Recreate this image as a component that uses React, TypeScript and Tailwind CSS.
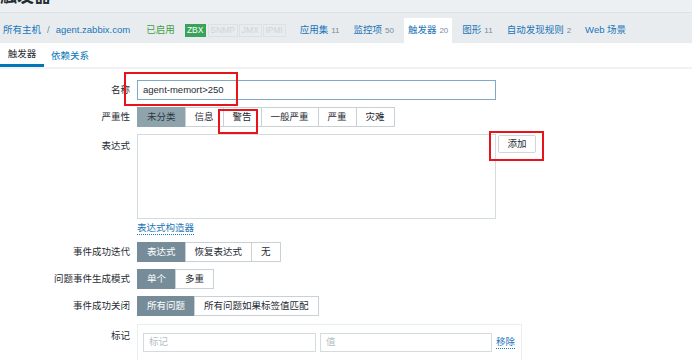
import React from "react";

const font = { fontFamily: '"Liberation Sans", "Noto Sans CJK SC", Arial, sans-serif' };

function Seg({ items, sel, selCls }: { items: string[]; sel: number; selCls?: string }) {
  return (
    <div className="flex h-[20px]">
      {items.map((t, i) => (
        <div
          key={t}
          className={
            "flex items-center px-[9px] border text-[9.5px] leading-none whitespace-nowrap " +
            (i > 0 ? "-ml-px " : "") +
            (i === sel
              ? selCls ?? "bg-[#768d99] border-[#768d99] text-white"
              : "bg-white border-[#c7d1d6] text-[#1f2c33]")
          }
        >
          {t}
        </div>
      ))}
    </div>
  );
}

function Row({ label, children, top }: { label: string; children: React.ReactNode; top?: boolean }) {
  return (
    <div className={"flex " + (top ? "items-start" : "items-center")}>
      <div className={"w-[130px] text-right text-[9.5px] text-[#1f2c33] whitespace-nowrap " + (top ? "pt-[5px]" : "")}>{label}</div>
      <div className="ml-[7px]">{children}</div>
    </div>
  );
}

function Cnt({ n }: { n: string }) {
  return <span className="ml-[3px] text-[8px] text-[#768d99]">{n}</span>;
}

export default function App() {
  return (
    <div style={font} className="relative w-[692px] h-[360px] overflow-hidden bg-white text-[9.5px]">
      {/* title */}
      <div className="h-[12px] bg-[#edf0f2] overflow-hidden relative">
        <div className="absolute left-0 top-[-13px] text-[17px] text-[#1f2c33] font-bold leading-[20px] whitespace-nowrap">触发器</div>
      </div>
      {/* host nav */}
      <div className="h-[31px] bg-[#e8ecef] border-t border-[#dde2e5] flex items-end pl-[3px] whitespace-nowrap">
        <div className="flex items-center h-[25px] text-[#1a75b8]">
          <span>所有主机</span>
          <span className="ml-[6px] text-[#768d99]">/</span>
          <span className="ml-[6px]">agent.zabbix.com</span>
          <span className="ml-[16px] text-[#429e47]">已启用</span>
          <div className="ml-[10px] flex text-[8.5px] leading-none">
            <span className="w-[21px] h-[13px] flex items-center justify-center bg-[#3aa35a] text-white">ZBX</span>
            <span className="ml-[2px] w-[30px] h-[13px] flex items-center justify-center text-[#cdd5da] border border-[#dbe1e4]">SNMP</span>
            <span className="ml-[1px] w-[23px] h-[13px] flex items-center justify-center text-[#cdd5da] border border-[#dbe1e4]">JMX</span>
            <span className="ml-[1px] w-[23px] h-[13px] flex items-center justify-center text-[#cdd5da] border border-[#dbe1e4]">IPMI</span>
          </div>
          <span className="ml-[14px]">应用集<Cnt n="11" /></span>
          <span className="ml-[14px]">监控项<Cnt n="50" /></span>
          <span className="ml-[10px] bg-white h-[25px] flex items-center px-[4px] self-end">
            触发器<Cnt n="20" />
          </span>
          <span className="ml-[10px]">图形<Cnt n="11" /></span>
          <span className="ml-[14px]">自动发现规则<Cnt n="2" /></span>
          <span className="ml-[14px]">Web 场景</span>
        </div>
      </div>
      {/* tabs */}
      <div className="flex h-[26px] border-b-[2px] border-[#f0f2f4]">
        <div className="w-[44px] flex items-center justify-center border-b-[3px] border-[#0275b8] text-[#1f2c33] pt-[2px]">触发器</div>
        <div className="ml-[7px] flex items-center text-[#0275b8] pt-[2px]">依赖关系</div>
      </div>
      {/* form */}
      <div className="pt-[11px] flex flex-col">
        <Row label="名称">
          <div className="w-[359px] h-[20px] border border-[#7ea9c8] flex items-center px-[5px] text-[9.5px] text-[#1f2c33]">
            agent-memort&gt;250
          </div>
        </Row>
        <div className="mt-[7px]">
          <Row label="严重性">
            <Seg items={["未分类", "信息", "警告", "一般严重", "严重", "灾难"]} sel={0} selCls="bg-[#8fa3ad] border-[#8fa3ad] text-[#2b3a42]" />
          </Row>
        </div>
        <div className="mt-[7px]">
          <Row label="表达式" top>
            <div className="flex items-start">
              <div className="w-[359px] h-[85px] border border-[#d4dbdf]" />
              <div className="ml-[2px] mt-[1px] w-[38px] h-[18px] flex items-center justify-center border border-[#cfd7db] rounded-[2px] text-[#1f2c33] bg-white">添加</div>
            </div>
          </Row>
        </div>
        <div className="ml-[137px] mt-[2px] h-[14px] flex items-center">
          <span className="text-[#1a75b8] border-b border-dotted border-[#1a75b8] leading-[12px]">表达式构造器</span>
        </div>
        <div className="mt-[7px]">
          <Row label="事件成功迭代">
            <Seg items={["表达式", "恢复表达式", "无"]} sel={0} />
          </Row>
        </div>
        <div className="mt-[7px]">
          <Row label="问题事件生成模式">
            <Seg items={["单个", "多重"]} sel={0} />
          </Row>
        </div>
        <div className="mt-[7px]">
          <Row label="事件成功关闭">
            <Seg items={["所有问题", "所有问题如果标签值匹配"]} sel={0} />
          </Row>
        </div>
        <div className="mt-[8px]">
          <Row label="标记" top>
            <div className="w-[385px] h-[60px] border border-[#ebeef0] pl-[5px] pt-[8px]">
              <div className="flex items-center">
                <div className="w-[173px] h-[19px] border border-[#d4dbdf] flex items-center px-[5px] text-[#b4bfc4]">标记</div>
                <div className="ml-[4px] w-[172px] h-[19px] border border-[#d4dbdf] flex items-center px-[5px] text-[#b4bfc4]">值</div>
                <span className="ml-[4px] text-[#1a75b8] border-b border-dotted border-[#1a75b8] leading-[12px] whitespace-nowrap">移除</span>
              </div>
              <div className="mt-[6px] text-[#1a75b8]">添加</div>
            </div>
          </Row>
        </div>
      </div>
      {/* red annotation boxes */}
      <div className="absolute left-[124px] top-[72px] w-[114px] h-[34px] border-2 border-[#e8141b]" />
      <div className="absolute left-[218px] top-[109px] w-[40px] h-[25px] border-2 border-[#e8141b]" />
      <div className="absolute left-[489px] top-[131px] w-[55px] h-[30px] border-2 border-[#e8141b]" />
    </div>
  );
}
